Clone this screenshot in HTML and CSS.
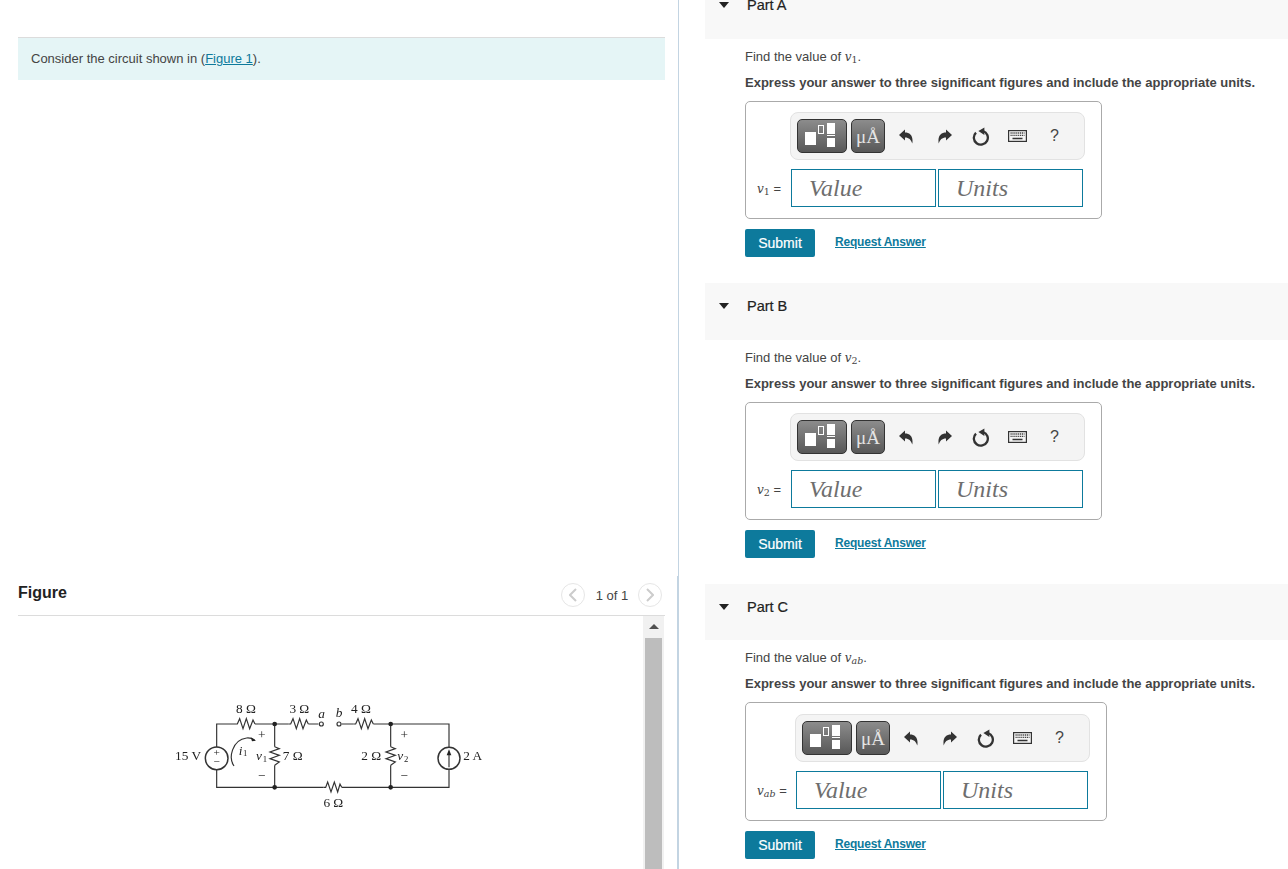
FILE: index.html
```html
<!DOCTYPE html>
<html lang="en">
<head>
    <meta charset="UTF-8">
    <meta name="viewport" content="width=device-width, initial-scale=1.0">
    <title>Circuit Problem</title>
    <link rel="stylesheet" href="styles.css">
</head>
<body>
    <svg class="defs" width="0" height="0">
        <defs>
            <symbol id="icon-undo" viewBox="0 0 14 15">
                <path d="M0 6 L6 .5 V3.6 C11 3.6 14.5 7 13.3 14.6 C12 10.8 10 8.6 6 8.6 V11.6 Z"/>
            </symbol>
            <symbol id="icon-redo" viewBox="0 0 14 15">
                <path d="M14 6 L8 .5 V3.6 C3 3.6 -.5 7 .7 14.6 C2 10.8 4 8.6 8 8.6 V11.6 Z"/>
            </symbol>
            <symbol id="icon-reset" viewBox="0 0 18 19">
                <path d="M11 4 A7 7 0 1 1 4 5.6" fill="none" stroke="#333" stroke-width="2.3"/>
                <path d="M12.4 .4 V8 L6.4 4 Z"/>
            </symbol>
            <symbol id="icon-keyboard" viewBox="0 0 19 12">
                <rect x=".6" y=".6" width="17.8" height="10.8" fill="#f4f4f4" stroke="#333" stroke-width="1.2"/>
                <path d="M2.5 3 H16.5 M2.5 5.4 H16.5" stroke="#444" stroke-width="1.4" stroke-dasharray="1.2 .7" fill="none"/>
                <path d="M4.5 8.5 H14.5" stroke="#333" stroke-width="1.5" fill="none"/>
            </symbol>
            <symbol id="icon-template" viewBox="0 0 50 34">
                <rect x="8" y="13" width="11" height="13" fill="#fff"/>
                <rect x="21.5" y="6.5" width="5" height="8" fill="none" stroke="#fff"/>
                <rect x="30" y="4" width="8" height="11" fill="#fff"/>
                <rect x="30" y="16" width="8" height="1" fill="#fff"/>
                <rect x="30" y="19" width="8" height="9" fill="#fff"/>
            </symbol>
        </defs>
    </svg>

    <div class="page">
        <div class="left">
            <div class="intro-pane">
                <div class="intro">Consider the circuit shown in (<a href="#">Figure 1</a>).</div>
            </div>

            <div class="figure-pane">
                <div class="figure-head">
                    <h2>Figure</h2>
                    <div class="pager">
                        <span class="pager-btn">
                            <svg width="8" height="14" viewBox="0 0 8 14"><path d="M7 1 L1 7 L7 13" fill="none" stroke="#ccc" stroke-width="2"/></svg>
                        </span>
                        <span class="pager-text">1 of 1</span>
                        <span class="pager-btn">
                            <svg width="8" height="14" viewBox="0 0 8 14"><path d="M1 1 L7 7 L1 13" fill="none" stroke="#ccc" stroke-width="2"/></svg>
                        </span>
                    </div>
                </div>
                <div class="figure-view">
                    <div class="figure-image">
                        <!-- circuit is drawn in 3x units -->
                        <svg class="circuit" width="340" height="125" viewBox="0 0 1020 375">
                            <g class="wires">
                                <path d="M225 102 H170 V292 H490 M545 292 H867 V102 H640 M580 102 H545 M475 102 H445 M385 102 H285"/>
                                <path d="M344 102 V170 M344 226 V292 M692 102 V170 M692 226 V292"/>
                                <path d="M225 102 L232 102 L239 86 L249 116 L259 86 L269 116 L279 90 L285 102"/>
                                <path d="M385 102 L392 102 L399 86 L409 116 L419 86 L429 116 L439 90 L445 102"/>
                                <path d="M580 102 L587 102 L594 86 L604 116 L614 86 L624 116 L634 90 L640 102"/>
                                <path d="M490 292 L497 292 L503 276 L513 306 L523 276 L533 306 L540 282 L545 292"/>
                                <path d="M344 170 L358 176 L330 186 L358 196 L330 206 L358 216 L344 226"/>
                                <path d="M692 170 L706 176 L678 186 L706 196 L678 206 L706 216 L692 226"/>
                                <circle cx="484" cy="102" r="6"/>
                                <circle cx="537" cy="102" r="6"/>
                                <circle class="source" cx="170" cy="205" r="34"/>
                                <circle class="source" cx="867" cy="205" r="33"/>
                                <path d="M867 232 V190"/>
                                <path d="M222 228 C205 205 215 150 260 144 C270 143 278 146 284 150"/>
                            </g>
                            <g class="dots">
                                <circle cx="344" cy="102" r="7"/>
                                <circle cx="344" cy="292" r="7"/>
                                <circle cx="692" cy="102" r="7"/>
                                <circle cx="692" cy="292" r="7"/>
                                <path d="M867 178 L860 196 H874 Z"/>
                                <path d="M288 152 L272 142 L276 154 Z"/>
                            </g>
                            <g class="labels">
                                <text x="258" y="69" text-anchor="middle">8 Ω</text>
                                <text x="418" y="69" text-anchor="middle">3 Ω</text>
                                <text x="603" y="69" text-anchor="middle">4 Ω</text>
                                <text x="485" y="84" text-anchor="middle" font-style="italic">a</text>
                                <text x="537" y="82" text-anchor="middle" font-style="italic">b</text>
                                <text x="305" y="147" text-anchor="middle">+</text>
                                <text x="305" y="269" text-anchor="middle">−</text>
                                <text x="733" y="147" text-anchor="middle">+</text>
                                <text x="733" y="269" text-anchor="middle">−</text>
                                <text x="170" y="197" text-anchor="middle" font-size="34">+</text>
                                <text x="170" y="226" text-anchor="middle" font-size="34">−</text>
                                <text x="84" y="209" text-anchor="middle">15 V</text>
                                <text x="236" y="194" font-style="italic">i</text>
                                <text x="249" y="198" font-size="26">1</text>
                                <text x="288" y="211" font-style="italic">v</text>
                                <text x="308" y="216" font-size="26">1</text>
                                <text x="368" y="209">7 Ω</text>
                                <text x="604" y="209">2 Ω</text>
                                <text x="712" y="209" font-style="italic">v</text>
                                <text x="732" y="216" font-size="26">2</text>
                                <text x="910" y="209">2 A</text>
                                <text x="520" y="350" text-anchor="middle">6 Ω</text>
                            </g>
                        </svg>
                    </div>
                    <div class="scrollbar">
                        <span class="scroll-up"></span>
                        <span class="scroll-thumb"></span>
                    </div>
                </div>
            </div>
        </div>

        <div class="right">
            <section class="part">
                <div class="part-head"><span class="caret"></span>Part A</div>
                <div class="part-body">
                    <p class="prompt">Find the value of <i class="math">v</i><sub class="math-sub">1</sub>.</p>
                    <p class="instruction">Express your answer to three significant figures and include the appropriate units.</p>
                    <div class="answer-box">
                        <div class="toolbar">
                            <span class="tool-btn tool-template"><svg width="50" height="34"><use href="#icon-template"/></svg></span>
                            <span class="tool-btn tool-units">μÅ</span>
                            <span class="tool tool-first"><svg width="14" height="15"><use href="#icon-undo"/></svg></span>
                            <span class="tool tool-redo"><svg width="14" height="15"><use href="#icon-redo"/></svg></span>
                            <span class="tool"><svg width="18" height="19"><use href="#icon-reset"/></svg></span>
                            <span class="tool"><svg width="19" height="12"><use href="#icon-keyboard"/></svg></span>
                            <span class="tool tool-help">?</span>
                        </div>
                        <div class="answer-row">
                            <label class="answer-label"><i class="math">v</i><sub class="math-sub">1</sub> =</label>
                            <input class="answer-input" type="text" placeholder="Value">
                            <input class="answer-input" type="text" placeholder="Units">
                        </div>
                    </div>
                    <div class="actions">
                        <button class="submit">Submit</button>
                        <a class="request" href="#">Request Answer</a>
                    </div>
                </div>
            </section>

            <section class="part">
                <div class="part-head"><span class="caret"></span>Part B</div>
                <div class="part-body">
                    <p class="prompt">Find the value of <i class="math">v</i><sub class="math-sub">2</sub>.</p>
                    <p class="instruction">Express your answer to three significant figures and include the appropriate units.</p>
                    <div class="answer-box">
                        <div class="toolbar">
                            <span class="tool-btn tool-template"><svg width="50" height="34"><use href="#icon-template"/></svg></span>
                            <span class="tool-btn tool-units">μÅ</span>
                            <span class="tool tool-first"><svg width="14" height="15"><use href="#icon-undo"/></svg></span>
                            <span class="tool tool-redo"><svg width="14" height="15"><use href="#icon-redo"/></svg></span>
                            <span class="tool"><svg width="18" height="19"><use href="#icon-reset"/></svg></span>
                            <span class="tool"><svg width="19" height="12"><use href="#icon-keyboard"/></svg></span>
                            <span class="tool tool-help">?</span>
                        </div>
                        <div class="answer-row">
                            <label class="answer-label"><i class="math">v</i><sub class="math-sub">2</sub> =</label>
                            <input class="answer-input" type="text" placeholder="Value">
                            <input class="answer-input" type="text" placeholder="Units">
                        </div>
                    </div>
                    <div class="actions">
                        <button class="submit">Submit</button>
                        <a class="request" href="#">Request Answer</a>
                    </div>
                </div>
            </section>

            <section class="part part-wide">
                <div class="part-head"><span class="caret"></span>Part C</div>
                <div class="part-body">
                    <p class="prompt">Find the value of <i class="math">v</i><sub class="math-sub"><i>ab</i></sub>.</p>
                    <p class="instruction">Express your answer to three significant figures and include the appropriate units.</p>
                    <div class="answer-box">
                        <div class="toolbar">
                            <span class="tool-btn tool-template"><svg width="50" height="34"><use href="#icon-template"/></svg></span>
                            <span class="tool-btn tool-units">μÅ</span>
                            <span class="tool tool-first"><svg width="14" height="15"><use href="#icon-undo"/></svg></span>
                            <span class="tool tool-redo"><svg width="14" height="15"><use href="#icon-redo"/></svg></span>
                            <span class="tool"><svg width="18" height="19"><use href="#icon-reset"/></svg></span>
                            <span class="tool"><svg width="19" height="12"><use href="#icon-keyboard"/></svg></span>
                            <span class="tool tool-help">?</span>
                        </div>
                        <div class="answer-row">
                            <label class="answer-label"><i class="math">v</i><sub class="math-sub"><i>ab</i></sub> =</label>
                            <input class="answer-input" type="text" placeholder="Value">
                            <input class="answer-input" type="text" placeholder="Units">
                        </div>
                    </div>
                    <div class="actions">
                        <button class="submit">Submit</button>
                        <a class="request" href="#">Request Answer</a>
                    </div>
                </div>
            </section>
        </div>
    </div>
</body>
</html>
```

FILE: styles.css
```css
* {
    box-sizing: border-box;
}
html, body {
    margin: 0;
    padding: 0;
    height: 869px;
    overflow: hidden;
    background-color: #fff;
}
body {
    font-family: "Liberation Sans", Arial, sans-serif;
    color: #444;
}
.defs {
    position: absolute;
}
.page {
    display: flex;
    height: 869px;
}

/* left column */
.left {
    width: 679px;
    flex: none;
    display: flex;
    flex-direction: column;
}
.intro-pane {
    height: 576px;
    padding: 37px 13px 0 18px;
    border-right: 1px solid #c3d4e2;
}
.intro {
    height: 43px;
    padding: 13px 13px 0;
    font-size: 13px;
    line-height: 16px;
    background-color: #e5f5f6;
    border-top: 1px solid #dcdcdc;
}
.intro a {
    color: #0d7a9c;
}
.figure-pane {
    flex: 1;
    padding: 0 12px 0 18px;
    border-right: 2px solid #c3d4e2;
    display: flex;
    flex-direction: column;
    min-height: 0;
}
.figure-head {
    height: 40px;
    display: flex;
    align-items: flex-start;
    justify-content: space-between;
    border-bottom: 1px solid #dcdcdc;
}
.figure-head h2 {
    margin: 8px 0 0;
    font-size: 16px;
    line-height: 18px;
    font-weight: bold;
    color: #222;
}
.pager {
    display: flex;
    align-items: center;
    margin: 7px 3px 0 0;
    font-size: 13px;
    color: #444;
}
.pager-text {
    width: 53px;
    padding: 1px 0 0 1px;
    text-align: center;
}
.pager-btn {
    width: 24px;
    height: 24px;
    border: 1px solid #e6e6e6;
    border-radius: 50%;
    display: flex;
    align-items: center;
    justify-content: center;
}
.figure-view {
    flex: 1;
    display: flex;
    min-height: 0;
}
.figure-image {
    flex: 1;
    padding: 74px 0 0 142px;
}
.circuit {
    display: block;
    filter: blur(0.3px);
}
.wires path, .wires circle {
    fill: none;
    stroke: #333;
    stroke-width: 3.5;
}
.wires circle {
    fill: #fff;
}
.wires .source {
    stroke-width: 4.5;
}
.dots {
    fill: #222;
}
.labels {
    font-family: "Liberation Serif", serif;
    font-size: 40px;
    fill: #222;
}
.scrollbar {
    width: 21px;
    margin-right: 1px;
    background-color: #f1f1f1;
    display: flex;
    flex-direction: column;
    align-items: center;
}
.scroll-up {
    margin-top: 8px;
    border-left: 5px solid transparent;
    border-right: 5px solid transparent;
    border-bottom: 5px solid #505050;
}
.scroll-thumb {
    width: 17px;
    flex: 1;
    margin-top: 9px;
    background-color: #bdbdbd;
}

/* right column */
.right {
    flex: 1;
    margin: -18px 0 0 26px;
}
.part {
    height: 301px;
}
.part-head {
    height: 57px;
    padding: 14px 0 0 14px;
    display: flex;
    align-items: flex-start;
    font-size: 14.5px;
    line-height: 18px;
    color: #222;
    background-color: #f8f8f8;
    -webkit-text-stroke: 0.2px #222;
}
.caret {
    width: 0;
    height: 0;
    margin: 6px 18px 0 0;
    border-left: 5.5px solid transparent;
    border-right: 5.5px solid transparent;
    border-top: 6px solid #222;
}
.part-body {
    padding: 0 0 0 40px;
}
.prompt {
    margin: 0;
    padding-top: 10px;
    height: 35px;
    font-size: 13px;
    line-height: 16px;
}
.instruction {
    margin: 0;
    height: 27px;
    padding-top: 1px;
    font-size: 13px;
    line-height: 16px;
    font-weight: bold;
}
.math {
    font-family: "DejaVu Serif", serif;
    font-style: italic;
    font-size: 12px;
}
.math-sub {
    font-family: "DejaVu Serif", serif;
    font-size: 9.5px;
    line-height: 0;
    vertical-align: -2px;
}
.answer-box {
    width: 357px;
    height: 118px;
    padding: 10px 0 0 44px;
    border: 1px solid #aaa;
    border-radius: 5px;
}
.toolbar {
    width: 295px;
    height: 48px;
    padding: 6px 0 0 6px;
    display: flex;
    align-items: flex-start;
    background-color: #f4f4f4;
    border: 1px solid #e2e2e2;
    border-radius: 8px;
}
.tool-btn {
    height: 34px;
    display: block;
    background: linear-gradient(#8c8c8c, #585858);
    border: 1px solid #333;
    border-radius: 5px;
    overflow: hidden;
}
.tool-template {
    width: 50px;
    margin-right: 4px;
}
.tool-template svg {
    display: block;
    margin: -1px;
}
.tool-units {
    width: 34px;
    color: #e4e4e4;
    text-align: center;
    font-family: "Liberation Serif", serif;
    font-size: 19px;
    line-height: 34px;
}
.tool {
    width: 37px;
    height: 34px;
    display: flex;
    align-items: center;
    justify-content: center;
    fill: #333;
}
.tool-first {
    margin-left: 3px;
    padding-right: 2px;
}
.tool-redo {
    padding-left: 2px;
}
.tool-help {
    font-size: 16px;
    color: #444;
}
.answer-row {
    display: flex;
    align-items: center;
    height: 38px;
    margin: 9px 0 0 -44px;
}
.answer-label {
    width: 45px;
    padding-left: 11px;
    font-size: 13px;
    white-space: nowrap;
}
.answer-input {
    width: 145px;
    height: 38px;
    margin-right: 2px;
    padding: 0 0 0 17px;
    border: 1px solid #0d7a9c;
    border-radius: 0;
    outline: none;
    background: #fff;
    font-family: "Liberation Serif", serif;
    font-style: italic;
    font-size: 24px;
}
.answer-input::placeholder {
    color: #6e6e6e;
    opacity: 1;
}
.actions {
    display: flex;
    align-items: flex-start;
    margin-top: 10px;
}
.submit {
    width: 70px;
    height: 28px;
    padding: 0;
    border: none;
    border-radius: 2px;
    background-color: #0d7a9c;
    color: #fff;
    font-family: "Liberation Sans", Arial, sans-serif;
    font-size: 14px;
    -webkit-text-stroke: 0.2px #fff;
}
.request {
    margin: 5px 0 0 20px;
    color: #0d7a9c;
    font-size: 12px;
    letter-spacing: -0.2px;
    line-height: 16px;
    font-weight: bold;
}

/* part C has a wider label so everything shifts 5px */
.part-wide .part-head {
    height: 56px;
}
.part-wide .instruction {
    height: 27px;
}
.part-wide .answer-box {
    width: 362px;
    height: 119px;
    padding: 11px 0 0 49px;
}
.part-wide .answer-row {
    margin-left: -49px;
}
.part-wide .answer-label {
    width: 50px;
}
```
